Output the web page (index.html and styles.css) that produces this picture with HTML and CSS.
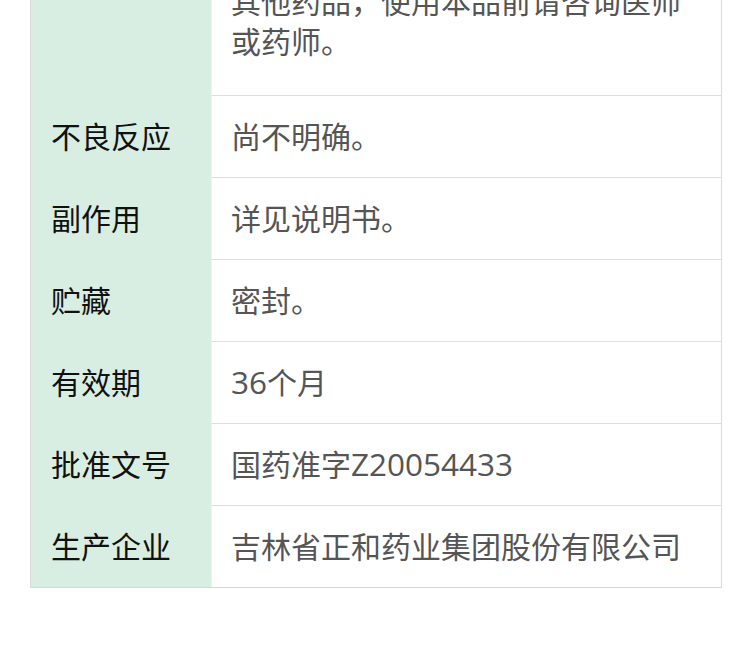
FILE: index.html
```html
<!DOCTYPE html>
<html lang="zh-CN">
<head>
<meta charset="utf-8">
<title>说明书</title>
<link rel="stylesheet" href="styles.css">
</head>
<body>
<div class="page">
  <div class="spec">
    <div class="label">注意事项</div>
    <div class="value value-long">1.忌烟、酒及辛辣食物。<br>2.过敏体质者慎用。<br>3.本品性状发生改变时禁用。<br>4.如正在使用<br>其他药品，使用本品前请咨询医师<br>或药师。</div>

    <div class="label">不良反应</div>
    <div class="value">尚不明确。</div>

    <div class="label">副作用</div>
    <div class="value">详见说明书。</div>

    <div class="label">贮藏</div>
    <div class="value">密封。</div>

    <div class="label">有效期</div>
    <div class="value"><span class="latin">36</span>个月</div>

    <div class="label">批准文号</div>
    <div class="value">国药准字<span class="latin">Z20054433</span></div>

    <div class="label">生产企业</div>
    <div class="value value-last">吉林省正和药业集团股份有限公司</div>
  </div>
</div>
</body>
</html>
```

FILE: styles.css
```css
html, body {
  margin: 0;
  padding: 0;
  background: #ffffff;
}

body {
  font-family: "Open Sans", "Noto Sans CJK SC", sans-serif;
  overflow: hidden;
}

.page {
  padding: 0 28px 0 30px;
}

.spec {
  margin-top: -198px;
  display: grid;
  grid-template-columns: 180px 1fr;
  border-left: 1px solid #d9dcdb;
  border-right: 1px solid #d9dcdb;
  border-bottom: 1px solid #d6d6d6;
  box-shadow: 0 1px 0 rgba(0, 0, 0, 0.05);
}

.label {
  display: flex;
  align-items: center;
  padding-left: 20px;
  background: #d9eee3;
  color: #111111;
  font-size: 30px;
  line-height: 40px;
}

.value {
  padding: 21px 20px 20px 19px;
  height: 40px;
  color: #555555;
  font-size: 30px;
  line-height: 40px;
  border-bottom: 1px solid #dddddd;
  border-left: 1px solid #f0f2f1;
  background: #ffffff;
}

.latin {
  font-size: 31.5px;
  line-height: 1;
}

.value-long {
  height: auto;
  padding-top: 20px;
  padding-bottom: 33px;
}

.value-last {
  border-bottom: none;
}
```
